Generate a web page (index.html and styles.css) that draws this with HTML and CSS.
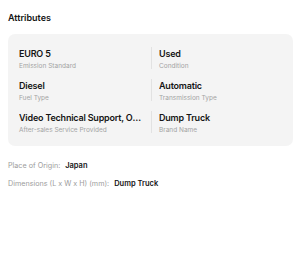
FILE: index.html
```html
<!DOCTYPE html>
<html>
<head>
<meta charset="utf-8">
<link rel="stylesheet" href="styles.css">
</head>
<body>
<div class="page">
  <div class="title">Attributes</div>
  <div class="card">
    <div class="grid">
      <div class="cell"><div class="val">EURO 5</div><div class="lab">Emission Standard</div></div>
      <div class="cell right"><div class="val">Used</div><div class="lab">Condition</div></div>
      <div class="cell"><div class="val">Diesel</div><div class="lab">Fuel Type</div></div>
      <div class="cell right"><div class="val">Automatic</div><div class="lab">Transmission Type</div></div>
      <div class="cell"><div class="val">Video Technical Support, Online Support</div><div class="lab">After-sales Service Provided</div></div>
      <div class="cell right"><div class="val">Dump Truck</div><div class="lab">Brand Name</div></div>
    </div>
  </div>
  <div class="rows">
    <div class="row"><span class="rl">Place of Origin:</span><span class="rv">Japan</span></div>
    <div class="row"><span class="rl">Dimensions (L x W x H) (mm):</span><span class="rv">Dump Truck</span></div>
  </div>
</div>
</body>
</html>
```

FILE: styles.css
```css
html, body {
  margin: 0;
  padding: 0;
  background: #ffffff;
}
body {
  font-family: Inter, "Noto Sans", sans-serif;
  color: #151515;
}
.page {
  padding: 12px 7px 0 8px;
}
.title {
  font-size: 9px;
  font-weight: 600;
  line-height: 12px;
  color: #151515;
}
.card {
  margin-top: 10px;
  background: #f4f4f4;
  border-radius: 7px;
  padding: 13px 11px;
}
.grid {
  display: grid;
  grid-template-columns: 124px 1fr;
  column-gap: 8px;
  row-gap: 10px;
}
.cell {
  min-width: 0;
  height: 22px;
}
.cell.right {
  border-left: 1px solid #e2e2e2;
  padding-left: 7px;
}
.val {
  font-size: 9px;
  font-weight: 600;
  line-height: 14px;
  letter-spacing: -0.2px;
  color: #151515;
  white-space: nowrap;
  overflow: hidden;
  text-overflow: ellipsis;
}
.lab {
  margin-top: 1px;
  font-size: 6.5px;
  line-height: 8px;
  color: #a3a3a3;
  white-space: nowrap;
}
.rows {
  margin-top: 15px;
  display: flex;
  flex-direction: column;
  row-gap: 8px;
}
.row {
  display: flex;
  column-gap: 5px;
  line-height: 10px;
  white-space: nowrap;
}
.rl {
  font-size: 7.2px;
  color: #9c9c9c;
}
.rv {
  font-size: 7.5px;
  font-weight: 600;
  color: #151515;
}
```
